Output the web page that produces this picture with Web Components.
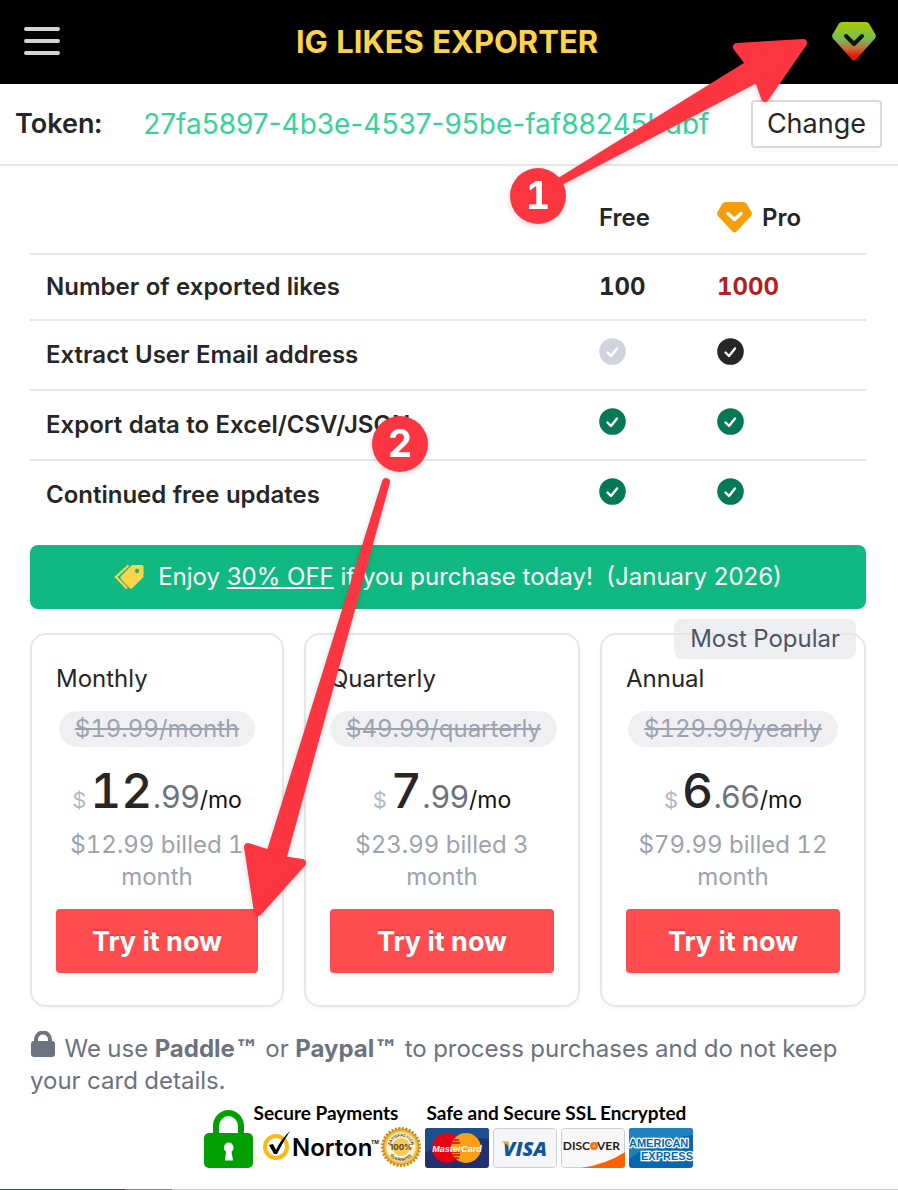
<!DOCTYPE html>
<html lang="en">
<head>
<meta charset="utf-8">
<title>IG Likes Exporter</title>
<style>
  body {
    position: relative;
    margin: 0;
    background: #fff;
    color: #262626;
    font: 24px/32px Inter, "Liberation Sans", sans-serif;
    font-variant-numeric: tabular-nums;
    overflow: hidden;
  }
  main {
    padding: 16px 32px 0 30px;
  }
  .plans {
    display: grid;
    grid-template-columns: minmax(0, 254fr) minmax(0, 276fr) minmax(0, 266fr);
    gap: 20px;
    margin: 24px 0;
  }
  .tm {
    font-family: "DejaVu Sans", sans-serif;
  }
</style>
</head>
<body>

<template id="app-header">
  <style>
    :host { display: block; background: #000; }
    header {
      display: flex;
      align-items: center;
      justify-content: space-between;
      height: 84px;
      padding: 0 22px;
    }
    h1 { margin: 0; color: #fcd34d; font-size: 31px; font-weight: 700; }
    button { display: flex; padding: 0; border: 0; background: none; }
  </style>
  <header>
    <button aria-label="Menu">
      <svg width="40" height="38" viewBox="0 0 40 38" stroke="#d4d4d4" stroke-width="4" stroke-linecap="round">
        <path d="M4 6h32M4 18h32M4 30h32"/>
      </svg>
    </button>
    <h1><slot></slot></h1>
    <button aria-label="Upgrade">
      <svg width="44" height="42" viewBox="0 0 44 42">
        <defs>
          <linearGradient id="gem" x2="0" y2="1">
            <stop offset="0" stop-color="#aacb00"/>
            <stop offset=".45" stop-color="#77bd55"/>
            <stop offset=".7" stop-color="#c46a3b"/>
            <stop offset=".88" stop-color="#ee1511"/>
          </linearGradient>
        </defs>
        <path fill="url(#gem)" d="M10 1h24q2 0 3 1.500l6.500 11q1 2-.5 4L24 38.500q-2 2-4 0L1 17.500q-1.500-2-.5-4l6.500-11Q8 1 10 1z"/>
        <path fill="none" stroke="#111" stroke-width="4" stroke-linecap="round" stroke-linejoin="round" d="M14 15l8 8 8-8"/>
      </svg>
    </button>
  </header>
</template>

<template id="token-bar">
  <style>
    :host {
      display: flex;
      align-items: center;
      justify-content: space-between;
      height: 80px;
      padding: 0 16px 0 15px;
      border-bottom: 2px solid #e5e7eb;
      font-size: 27px;
    }
    b { font-weight: 600; }
    output { color: #34d399; font-size: 28px; font-variant-numeric: normal; }
    button {
      height: 48px;
      padding: 0 14px;
      border: 2px solid #d9d9d9;
      border-radius: 4px;
      background: #fff;
      box-shadow: 0 4px 0 rgba(0, 0, 0, .02);
      color: inherit;
      font: inherit;
    }
  </style>
  <b>Token:</b>
  <output><slot></slot></output>
  <button>Change</button>
</template>

<template id="check-mark">
  <style>
    :host { display: block; width: 27px; height: 27px; color: #047857; }
    :host([tone="muted"]) { color: #d1d5db; }
    :host([tone="dark"]) { color: #262626; }
    svg { display: block; }
  </style>
  <svg width="27" height="27" viewBox="0 0 27 27" fill="none">
    <circle cx="13.500" cy="13.500" r="13.300" fill="currentColor"/>
    <path d="M8.500 14.500l3.500 3.500 6-7.500" stroke="#fff" stroke-width="2.400" stroke-linecap="round" stroke-linejoin="round"/>
  </svg>
</template>

<template id="plan-table">
  <style>
    :host { display: block; }
    table { width: 100%; border-spacing: 0; table-layout: fixed; }
    th, td { padding: 0 16px; text-align: left; font-weight: 600; border-bottom: 2px solid #e5e7eb; }
    th { height: 71px; }
    td { height: 68px; }
    .count td { height: 64px; }
    .count td:nth-child(n + 2) { font-weight: 700; }
    tr:last-child td { border-bottom: 0; }
    .free { width: 86px; }
    .pro { width: 133px; }
    .pro span { display: flex; align-items: center; gap: 10px; }
    .limit { color: #b91c1c; }
    check-mark { margin-bottom: 8px; }
  </style>
  <table>
    <thead>
      <tr>
        <th></th>
        <th class="free">Free</th>
        <th class="pro">
          <span>
            <svg width="35" height="32" viewBox="0 0 35 32">
              <path fill="#f59e0b" d="M8.500 0h18q2 0 3 1.500l5 8.500q1 2-.5 4L19.500 29.500q-2 2-4 0L1 14q-1.500-2-.5-4l5-8.500Q6.500 0 8.500 0z"/>
              <path fill="none" stroke="#fff" stroke-width="3.500" stroke-linecap="round" stroke-linejoin="round" d="M11 11.500l6.500 6 6.500-6"/>
            </svg>
            Pro
          </span>
        </th>
      </tr>
    </thead>
    <tbody>
      <tr class="count"><td>Number of exported likes</td><td>100</td><td class="limit">1000</td></tr>
      <tr><td>Extract User Email address</td><td><check-mark tone="muted"></check-mark></td><td><check-mark tone="dark"></check-mark></td></tr>
      <tr><td>Export data to Excel/CSV/JSON</td><td><check-mark></check-mark></td><td><check-mark></check-mark></td></tr>
      <tr><td>Continued free updates</td><td><check-mark></check-mark></td><td><check-mark></check-mark></td></tr>
    </tbody>
  </table>
</template>

<template id="promo-banner">
  <style>
    :host {
      display: flex;
      align-items: center;
      justify-content: center;
      gap: 14px;
      height: 64px;
      margin-top: 16px;
      border-radius: 8px;
      background: #10b981;
      color: #fff;
      font-variant-numeric: normal;
    }
  </style>
  <svg width="30" height="26" viewBox="0 0 30 26">
    <path fill="#fcd34d" fill-rule="evenodd" d="M18 1h10q1.500 0 1.500 1.500V13L18.500 24q-1.500 1.500-3 0L7 15q-1.500-1.500 0-3zM23 4.800a2.200 2.200 0 1 0 .01 0z"/>
    <path fill="none" stroke="#fcd34d" stroke-width="2.200" d="M14.500 1.500L2 13l11 11.500"/>
  </svg>
  <span><slot></slot></span>
</template>

<template id="price-card">
  <style>
    :host {
      position: relative;
      display: block;
      padding: 28px 24px 32px;
      border: 2px solid #e5e7eb;
      border-radius: 16px;
      box-shadow: 0 2px 4px rgba(0, 0, 0, .03);
      text-align: center;
    }
    h2 { margin: 0; font-size: 24px; font-weight: 400; text-align: left; }
    del {
      display: inline-block;
      margin-top: 16px;
      padding: 0 16px;
      border-radius: 18px;
      background: #f0f0f3;
      color: #9ca3af;
      line-height: 36px;
      white-space: nowrap;
    }
    .price { margin: 12px 0 6px; font-size: 48px; line-height: 64px; white-space: nowrap; }
    .price > * { line-height: 32px; }
    .price small { margin-right: 4px; color: #b3b8c2; font-size: 22px; }
    .price strong { font-weight: 500; }
    .price i { color: #6b7280; font-size: 31px; font-style: normal; font-variant-numeric: normal; }
    .price span { color: #111; font-size: 23px; }
    .bill { max-width: 200px; margin: 0 auto 16px; color: #9ca3af; }
    button {
      width: 100%;
      height: 64px;
      border: 0;
      border-radius: 4px;
      background: #ff4d4f;
      box-shadow: 0 4px 0 rgba(0, 0, 0, .04);
      color: #fff;
      font: 700 27px Inter, "Liberation Sans", sans-serif;
      text-shadow: 0 -2px 0 rgba(0, 0, 0, .12);
    }
    .tag {
      position: absolute;
      top: -16px;
      right: 8px;
      padding: 4px 16px;
      border-radius: 8px;
      background: rgba(229, 229, 234, .6);
      color: #4b5563;
    }
    .tag:empty { display: none; }
  </style>
  <h2></h2>
  <del></del>
  <div class="price"><small>$</small><strong></strong><i></i><span>/mo</span></div>
  <div class="bill"><slot></slot></div>
  <button>Try it now</button>
  <div class="tag"></div>
</template>

<template id="payment-note">
  <style>
    :host { display: block; color: #6b7280; }
    svg { margin-right: 2px; vertical-align: -1px; }
  </style>
  <svg width="26" height="27" viewBox="0 0 26 27">
    <path fill="none" stroke="#6b7280" stroke-width="4" d="M6 13V8.500a7 7 0 0 1 14 0V13"/>
    <rect x="1" y="10" width="24" height="16" rx="3" fill="#6b7280"/>
  </svg>
  <slot></slot>
</template>

<template id="trust-badges">
  <style>
    :host {
      display: flex;
      justify-content: center;
      margin-top: 6px;
      padding-bottom: 19px;
      color: #000;
      font: 700 19px/20px Lato, "Open Sans", sans-serif;
    }
    .lock { margin-top: 6px; }
    .group { display: grid; gap: 3px; margin-left: 4px; }
    .first { margin-left: 1px; }
    .group > span { padding-left: 2px; }
    .first > span { padding: 0; }
    .row { display: flex; gap: 4px; }
    svg { display: block; }
  </style>
  <svg class="lock" width="49" height="59" viewBox="0 0 49 59" role="img" aria-label="Secure">
    <path fill="none" stroke="#00a000" stroke-width="6" d="M12 30V17a12.500 13 0 0 1 25 0v13"/>
    <rect y="24" width="49" height="35" rx="5" fill="#00a000"/>
    <path fill="#fff" d="M24.500 33.500a5 5 0 0 1 3 9l1.500 9h-8l1-9a5 5 0 0 1 2.500-9z"/>
  </svg>
  <div class="group first">
    <span>Secure Payments</span>
    <svg width="167" height="44" viewBox="0 0 167 44">
      <circle cx="22" cy="21" r="11" fill="none" stroke="#fdb913" stroke-width="4"/>
      <path d="M15 19l4-1 3 6Q27 13 36 5q-7 11-13 23h-3z"/>
      <text x="38" y="30" font-family="Inter, sans-serif" font-size="24" font-weight="600">Norton</text>
      <text x="117" y="18" font-family="Inter, sans-serif" font-size="5" font-weight="600">TM</text>
      <circle cx="147" cy="21" r="18.500" fill="#e3a82c" stroke="#c98a18" stroke-width="3" stroke-dasharray="2 1.500"/>
      <circle cx="147" cy="21" r="15.500" fill="#fff4cf" stroke="#efc55a" stroke-width="2"/>
      <circle cx="147" cy="21" r="9" fill="#f5c95b"/>
      <path id="arc-top" fill="none" d="M136.500 21a10.500 10.500 0 0 1 21 0"/>
      <path id="arc-low" fill="none" d="M133 21a14 14 0 0 0 28 0"/>
      <g font-family="Inter, sans-serif" font-weight="700" fill="#51451f" text-anchor="middle">
        <text font-size="4"><textPath href="#arc-top" startOffset="50%">SATISFACTION</textPath></text>
        <text font-size="4"><textPath href="#arc-low" startOffset="50%">GUARANTEE</textPath></text>
        <text x="147" y="24" font-size="8">100%</text>
      </g>
    </svg>
  </div>
  <div class="group">
    <span>Safe and Secure SSL Encrypted</span>
    <div class="row">
      <svg width="64" height="42" viewBox="0 0 64 42">
        <rect y="1" width="64" height="40" rx="3" fill="#203070"/>
        <path fill="#1d4f8c" d="M3 1h58q3 0 3 3v8Q30 8 0 26V4q0-3 3-3z"/>
        <circle cx="22" cy="21" r="15" fill="#e60012"/>
        <circle cx="41" cy="21" r="15" fill="#fa9f16"/>
        <path stroke="#e60012" stroke-width="1.500" d="M29 13h5M27 16h8M27 25h8M28 28h7M29 31h5"/>
        <text x="32" y="25" text-anchor="middle" font-family="'Liberation Sans', sans-serif" font-size="9" font-weight="700" font-style="italic" fill="#fff">MasterCard</text>
      </svg>
      <svg width="64" height="42" viewBox="0 0 64 42">
        <rect x=".5" y="1.500" width="63" height="39" rx="3" fill="#f5f6f8" stroke="#ccd0d5"/>
        <text x="32" y="29" text-anchor="middle" font-family="'Open Sans', sans-serif" font-size="20" font-weight="800" font-style="italic" fill="#15539d">VISA</text>
        <path fill="#f6a51b" d="M8 14.500h7l2 7q-3-5-9-7z"/>
      </svg>
      <svg width="64" height="42" viewBox="0 0 64 42">
        <rect x=".5" y="1.500" width="63" height="39" rx="3" fill="#f8f8f9" stroke="#ccd0d5"/>
        <path fill="#ff6000" d="M20 41q26-4 44-16v13q0 3-3 3z"/>
        <g font-family="Lato, sans-serif" font-size="12" font-weight="700" fill="#222">
          <text x="29" y="23" text-anchor="end">DISC</text>
          <text x="36" y="23">VER</text>
        </g>
        <circle cx="33" cy="19" r="4" fill="#f47216"/>
        <circle cx="33" cy="19" r="1.500" fill="#ffb27a"/>
      </svg>
      <svg width="64" height="42" viewBox="0 0 64 42">
        <rect y="1" width="64" height="40" rx="3" fill="#0867ae"/>
        <path fill="#2181bf" d="M3 1h58q3 0 3 3v4Q26 12 0 32V4q0-3 3-3z"/>
        <g font-family="'Liberation Sans', sans-serif" font-size="11" font-weight="700" fill="#0867ae" stroke="#fff" stroke-width="2.500" paint-order="stroke">
          <text x="0" y="20">AMERICAN</text>
          <text x="12" y="33">EXPRESS</text>
        </g>
      </svg>
    </div>
  </div>
</template>

<!-- top edge of whatever follows the popup -->
<template id="page-edge">
  <style>
    :host {
      display: block;
      height: 2px;
      background: linear-gradient(90deg, #1d5a6d 125px, #858080 125px 172px, #cbcbcb 172px);
    }
  </style>
</template>

<template id="step-arrows">
  <style>
    :host { position: absolute; top: 0; left: 0; pointer-events: none; }
    svg { display: block; filter: drop-shadow(0 2px 3px rgba(0, 0, 0, .15)); }
  </style>
  <svg width="898" height="1000" viewBox="0 0 898 1000" fill="#fb3640">
    <g stroke="#fb3640" stroke-width="8" stroke-linejoin="round">
      <path d="M561 181L750 64L737 47L803 43L765 98L758 78z"/>
      <path d="M386 482L270 854L248 847L258 912L302 863L282 860z"/>
    </g>
    <circle cx="538" cy="196" r="28"/>
    <circle cx="400" cy="444" r="28"/>
    <g fill="#fff" font-size="38" font-weight="700" text-anchor="middle">
      <text x="538" y="209">1</text>
      <text x="400" y="457">2</text>
    </g>
  </svg>
</template>

<app-header>IG LIKES EXPORTER</app-header>
<token-bar>27fa5897-4b3e-4537-95be-faf88245bdbf</token-bar>
<main>
  <plan-table></plan-table>
  <promo-banner>Enjoy <u>30% OFF</u> if you purchase today!&nbsp; (January 2026)</promo-banner>
  <div class="plans">
    <price-card name="Monthly" was="$19.99/month" price="12.99">$12.99 billed 1 month</price-card>
    <price-card name="Quarterly" was="$49.99/quarterly" price="7.99">$23.99 billed 3 month</price-card>
    <price-card name="Annual" was="$129.99/yearly" price="6.66" tag="Most Popular">$79.99 billed 12 month</price-card>
  </div>
  <payment-note>We use <b>Paddle<span class="tm">™</span></b> or <b>Paypal<span class="tm">™</span></b> to process purchases and do not keep your card details.</payment-note>
  <trust-badges></trust-badges>
</main>
<page-edge></page-edge>
<step-arrows></step-arrows>

<script>
  class BaseElement extends HTMLElement {
    constructor() {
      super();
      const template = document.getElementById(this.localName);
      this.attachShadow({ mode: "open" }).appendChild(template.content.cloneNode(true));
    }
  }

  class PriceCard extends BaseElement {
    connectedCallback() {
      const find = (selector) => this.shadowRoot.querySelector(selector);
      const [whole, cents] = this.getAttribute("price").split(".");

      find("h2").textContent = this.getAttribute("name");
      find("del").textContent = this.getAttribute("was");
      find("strong").textContent = whole;
      find("i").textContent = "." + cents;
      find(".tag").textContent = this.getAttribute("tag") || "";
    }
  }

  customElements.define("app-header", class extends BaseElement {});
  customElements.define("token-bar", class extends BaseElement {});
  customElements.define("check-mark", class extends BaseElement {});
  customElements.define("plan-table", class extends BaseElement {});
  customElements.define("promo-banner", class extends BaseElement {});
  customElements.define("price-card", PriceCard);
  customElements.define("payment-note", class extends BaseElement {});
  customElements.define("trust-badges", class extends BaseElement {});
  customElements.define("page-edge", class extends BaseElement {});
  customElements.define("step-arrows", class extends BaseElement {});
</script>
</body>
</html>
